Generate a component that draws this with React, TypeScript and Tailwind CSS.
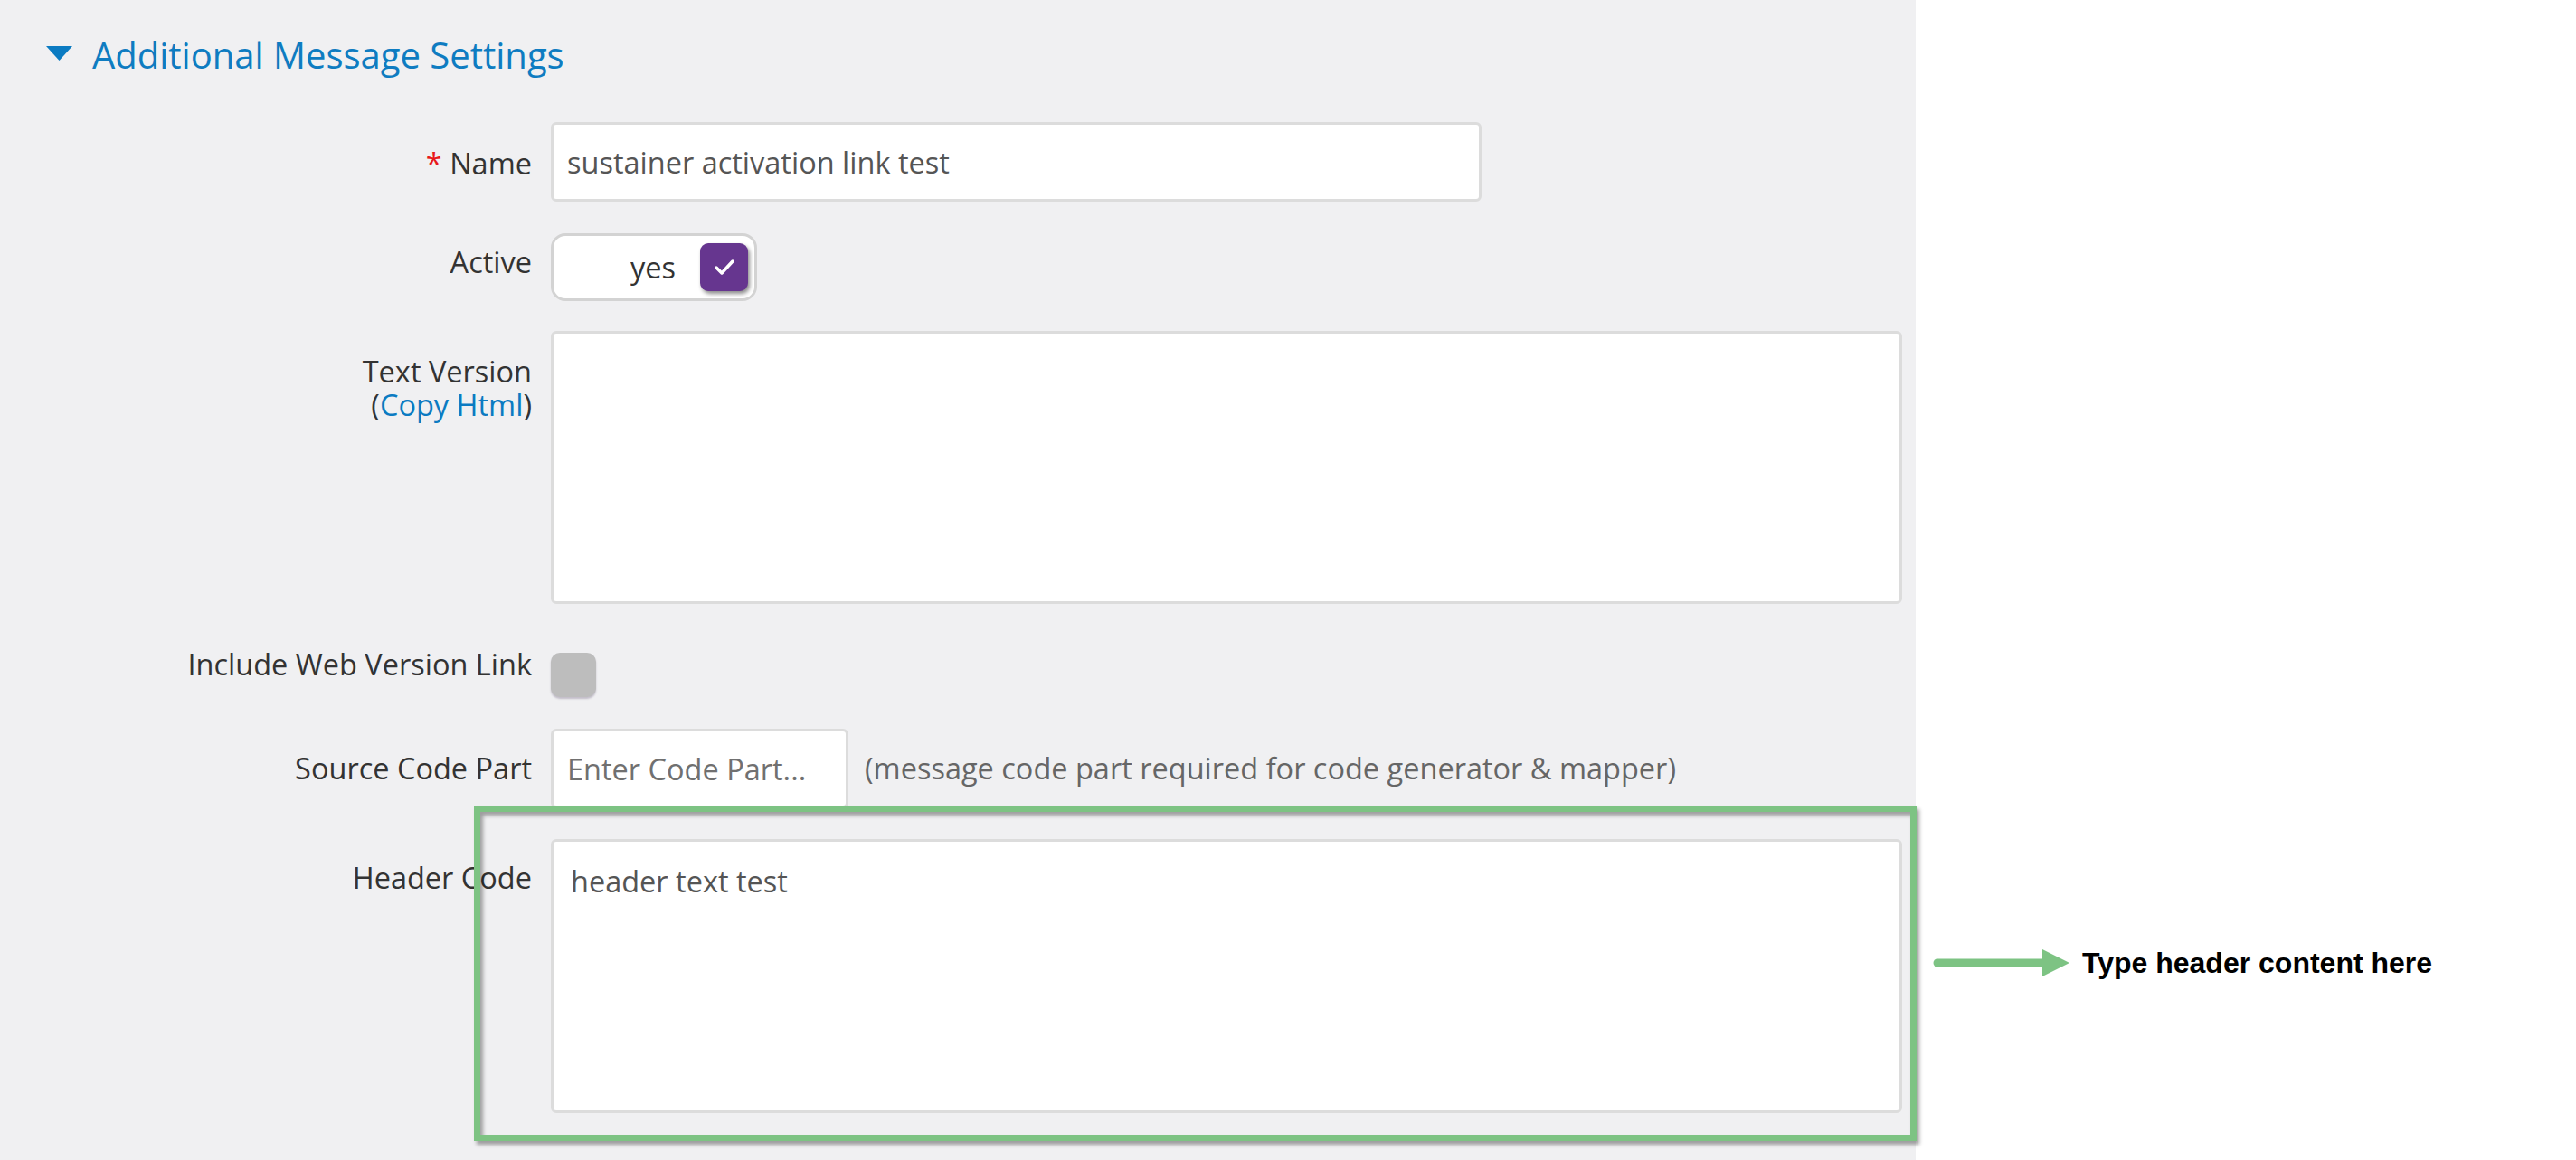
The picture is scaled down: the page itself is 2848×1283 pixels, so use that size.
import React from "react";

const label = "w-[588px] shrink-0 text-right text-[32.5px] text-[#333333] whitespace-nowrap";

export default function App() {
  return (
    <div className="flex min-h-[1283px] w-full bg-white font-['Open_Sans',sans-serif]">
      <div className="relative w-[2118px] shrink-0 bg-[#f0f0f2] pt-[34px]">
        {/* Heading */}
        <div className="flex items-start">
          <svg className="ml-[51px] mt-[17px] shrink-0" width="29" height="16" viewBox="0 0 29 16">
            <polygon points="0,0 29,0 14.5,16" fill="#0b7bc2" />
          </svg>
          <div className="ml-[22px] text-[40px] leading-[54px] text-[#0e7cc1] whitespace-nowrap">
            Additional Message Settings
          </div>
        </div>

        {/* Name */}
        <div className="mt-[47px] flex items-start">
          <div className={`${label} pt-[24px] leading-[44px]`}>
            <span className="text-[#e8191b]">*</span> Name
          </div>
          <input
            readOnly
            value="sustainer activation link test"
            className="ml-[21px] h-[88px] w-[1029px] rounded-[6px] border-[3px] border-[#dcdcdc] bg-white px-[15px] text-[32.5px] text-[#555555] outline-none"
          />
        </div>

        {/* Active */}
        <div className="mt-[35px] flex items-start">
          <div className={`${label} pt-[10px] leading-[44px]`}>Active</div>
          <div className="ml-[21px] flex h-[75px] w-[228px] items-center justify-end gap-[27px] rounded-[16px] border-[3px] border-[#d3d3d3] bg-white pr-[7px]">
            <span className="text-[32.5px] leading-[44px] text-[#333333]">yes</span>
            <div className="flex h-[53px] w-[53px] items-center justify-center rounded-[9px] bg-[#66368f] shadow-[2px_3px_4px_rgba(0,0,0,0.45)]">
              <svg width="24" height="19" viewBox="0 0 24 19">
                <polyline points="3,10 9,16 21,3" fill="none" stroke="#ffffff" strokeWidth="3.5" strokeLinecap="round" strokeLinejoin="round" />
              </svg>
            </div>
          </div>
        </div>

        {/* Text Version */}
        <div className="mt-[33px] flex items-start">
          <div className={`${label} pt-[26px] leading-[37px]`}>
            <div>Text Version</div>
            <div>
              (<span className="text-[#0b7bc2]">Copy Html</span>)
            </div>
          </div>
          <textarea
            readOnly
            value=""
            className="ml-[21px] h-[302px] w-[1494px] resize-none rounded-[6px] border-[3px] border-[#dcdcdc] bg-white outline-none"
          />
        </div>

        {/* Include Web Version Link */}
        <div className="mt-[45px] flex items-start">
          <div className={`${label} leading-[44px]`}>Include Web Version Link</div>
          <div className="ml-[21px] mt-[9px] h-[49px] w-[50px] rounded-[10px] bg-[#bdbdbd] shadow-[0_2px_2px_rgba(60,40,80,0.25)]" />
        </div>

        {/* Source Code Part */}
        <div className="mt-[35px] flex items-start">
          <div className={`${label} pt-[22px] leading-[44px]`}>Source Code Part</div>
          <input
            readOnly
            placeholder="Enter Code Part..."
            className="ml-[21px] h-[88px] w-[329px] rounded-[6px] border-[3px] border-[#dcdcdc] bg-white px-[15px] text-[32.5px] text-[#555555] outline-none placeholder:text-[#707070]"
          />
          <div className="ml-[18px] pt-[22px] text-[32.5px] leading-[44px] text-[#666666] whitespace-nowrap">
            (message code part required for code generator &amp; mapper)
          </div>
        </div>

        {/* Header Code */}
        <div className="mt-[34px] flex items-start">
          <div className={`${label} pt-[21px] leading-[44px]`}>Header Code</div>
          <textarea
            readOnly
            value="header text test"
            className="ml-[21px] h-[303px] w-[1494px] resize-none rounded-[6px] border-[3px] border-[#dcdcdc] bg-white px-[19px] pt-[22px] text-[32.5px] leading-[44px] text-[#555555] outline-none"
          />
        </div>

        {/* Green highlight overlay */}
        <div className="pointer-events-none absolute left-[524px] top-[891px] h-[371px] w-[1595px] border-[7px] border-[#7dc383] shadow-[3px_4px_4px_rgba(0,0,0,0.35),inset_3px_4px_4px_rgba(0,0,0,0.35)]" />
      </div>

      {/* Annotation */}
      <div className="flex-1 pl-[19px] pt-[1045px]">
        <div className="flex h-[40px] items-center">
          <svg width="151" height="30" viewBox="0 0 151 30" className="shrink-0">
            <line x1="5" y1="15" x2="124" y2="15" stroke="#7dc383" strokeWidth="9" strokeLinecap="round" />
            <polygon points="121,0 151,15 121,30" fill="#7dc383" />
          </svg>
          <span className="ml-[14px] font-['Liberation_Sans',Arial,sans-serif] text-[32px] font-bold leading-[40px] text-black whitespace-nowrap">
            Type header content here
          </span>
        </div>
      </div>
    </div>
  );
}
